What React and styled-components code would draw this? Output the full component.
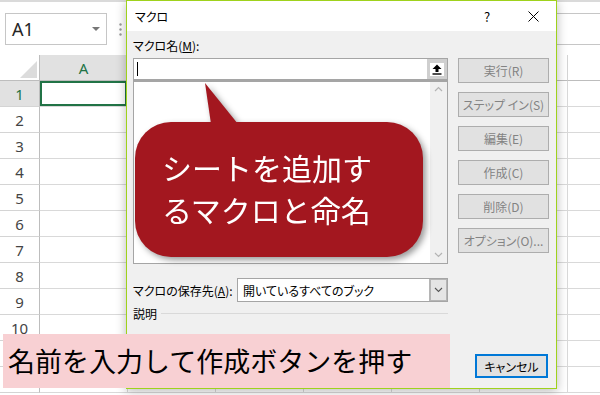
import React from 'react';
import styled, { createGlobalStyle } from 'styled-components';

const GlobalStyle = createGlobalStyle`
  html, body {
    margin: 0;
    padding: 0;
    background: #fff;
  }
  body {
    font-family: "Noto Sans CJK JP", "Noto Sans", sans-serif;
  }
`;

const jp = `"Noto Sans CJK JP", "Noto Sans", sans-serif`;

const Sheet = styled.div`
  position: relative;
  width: 600px;
  height: 395px;
  overflow: hidden;
  background: #fff;
`;

const TopBar = styled.div`
  display: flex;
  align-items: flex-start;
  height: 55px;
  box-sizing: border-box;
  border-top: 2px solid #dadada;
  padding-top: 11px;
`;

const NameBox = styled.div`
  display: flex;
  align-items: center;
  justify-content: space-between;
  width: 102px;
  height: 32px;
  margin-left: 5px;
  box-sizing: border-box;
  border: 1px solid #c6c6c6;
  padding: 0 6px;
  font-family: "Noto Sans", sans-serif;
  font-size: 18px;
  color: #262626;
`;

const Caret = styled.span`
  width: 0;
  height: 0;
  border-left: 4px solid transparent;
  border-right: 4px solid transparent;
  border-top: 4px solid #777;
`;

const DotsWrap = styled.div`
  display: flex;
  align-items: center;
  height: 32px;
  margin-left: 12px;
`;

const FormulaBar = styled.div`
  flex: 1;
  height: 32px;
  margin-left: 6px;
  box-sizing: border-box;
  border-top: 1px solid #c6c6c6;
  border-bottom: 1px solid #c6c6c6;
`;

const Grid = styled.div`
  display: grid;
  grid-template-columns: 40px repeat(7, 88px);
  grid-template-rows: 26px;
  grid-auto-rows: 26px;
  font-family: "Noto Sans", sans-serif;
`;

const Corner = styled.div`
  position: relative;
  box-sizing: border-box;
  border-right: 1px solid #bdbdbd;
  border-bottom: 1px solid #bdbdbd;

  &::after {
    content: '';
    position: absolute;
    right: 2px;
    bottom: 2px;
    width: 0;
    height: 0;
    border-left: 17px solid transparent;
    border-bottom: 17px solid #dcdcdc;
  }
`;

const ColHeader = styled.div`
  display: flex;
  align-items: center;
  justify-content: center;
  box-sizing: border-box;
  border-right: 1px solid #d4d4d4;
  border-bottom: 1px solid #bdbdbd;
  background: ${p => (p.$active ? '#e1e1e1' : '#fff')};
  color: ${p => (p.$active ? '#217346' : '#444')};
  font-size: 15px;
`;

const RowHeader = styled.div`
  display: flex;
  align-items: center;
  justify-content: center;
  box-sizing: border-box;
  border-right: 1px solid #bdbdbd;
  border-bottom: 1px solid #d4d4d4;
  background: ${p => (p.$active ? '#e1e1e1' : '#fff')};
  color: ${p => (p.$active ? '#217346' : '#444')};
  font-size: 15px;
`;

const Cell = styled.div`
  box-sizing: border-box;
  border-right: 1px solid #d9d9d9;
  border-bottom: 1px solid #d9d9d9;
  box-shadow: ${p => (p.$selected ? 'inset 0 0 0 2px #217346' : 'none')};
`;

const Dialog = styled.div`
  position: absolute;
  left: 126px;
  top: 0;
  width: 431px;
  height: 389px;
  box-sizing: border-box;
  border: 1px solid #9fd21c;
  display: flex;
  flex-direction: column;
  background: #f0f0f0;
  box-shadow: 0 2px 10px rgba(0, 0, 0, 0.28);
  font-family: ${jp};
  font-feature-settings: "palt";
  font-size: 12px;
  color: #000;
`;

const TitleBar = styled.div`
  display: flex;
  align-items: center;
  height: 30px;
  background: #fff;
  padding-left: 8px;
`;

const TitleText = styled.span`
  flex: 1;
`;

const TitleButton = styled.div`
  display: flex;
  align-items: center;
  justify-content: center;
  width: 46px;
  height: 30px;
  font-size: 13px;
`;

const Body = styled.div`
  flex: 1;
  padding: 6px 7px 0 6px;
`;

const Main = styled.div`
  display: grid;
  grid-template-columns: 315px 91px;
  column-gap: 10px;
`;

const LeftCol = styled.div`
  display: flex;
  flex-direction: column;
`;

const Label = styled.div`
  height: 18px;
  line-height: 18px;
  margin-bottom: 3px;
`;

const NameInput = styled.div`
  display: flex;
  align-items: center;
  height: 22px;
  box-sizing: border-box;
  border: 1px solid #a5a5a5;
  background: #fff;
`;

const TextCursor = styled.span`
  width: 1px;
  height: 14px;
  margin-left: 3px;
  background: #000;
`;

const UploadButton = styled.div`
  display: flex;
  align-items: center;
  justify-content: center;
  margin-left: auto;
  width: 20px;
  height: 20px;
  background: #cfcfcf;
`;

const UploadInner = styled.div`
  display: flex;
  align-items: center;
  justify-content: center;
  width: 14px;
  height: 13px;
  background: #fff;
`;

const ListBox = styled.div`
  display: flex;
  height: 184px;
  box-sizing: border-box;
  border: 1px solid #a5a5a5;
  border-top-width: 2px;
  background: #fff;
`;

const ListArea = styled.div`
  flex: 1;
`;

const ScrollBar = styled.div`
  display: flex;
  flex-direction: column;
  justify-content: space-between;
  align-items: center;
  width: 17px;
  padding: 4px 0 5px;
  background: #f0f0f0;
`;

const RightCol = styled.div`
  display: flex;
  flex-direction: column;
  gap: 9px;
  padding-top: 21px;
`;

const Button = styled.div`
  display: flex;
  align-items: center;
  justify-content: center;
  height: 25px;
  box-sizing: border-box;
  border: 1px solid #adadad;
  background: #e1e1e1;
  color: #838383;
  white-space: nowrap;
`;

const SaveRow = styled.div`
  display: flex;
  align-items: center;
  width: 315px;
  height: 24px;
  margin-top: 14px;
`;

const SaveLabel = styled.div`
  width: 104px;
`;

const Select = styled.div`
  display: flex;
  align-items: stretch;
  flex: 1;
  height: 24px;
  box-sizing: border-box;
  border: 1px solid #a5a5a5;
  background: #fff;
`;

const SelectText = styled.div`
  flex: 1;
  display: flex;
  align-items: center;
  padding-left: 5px;
`;

const SelectArrow = styled.div`
  display: flex;
  align-items: center;
  justify-content: center;
  width: 15px;
  border: 1px solid #b5b5b5;
  border-left-width: 2px;
  background: #e5e5e5;
`;

const DescRow = styled.div`
  display: flex;
  align-items: center;
  width: 315px;
  height: 16px;
  margin-top: 3px;
`;

const Divider = styled.div`
  flex: 1;
  height: 1px;
  margin-left: 4px;
  background: #d9d9d9;
`;

const Footer = styled.div`
  display: flex;
  justify-content: flex-end;
  margin-top: 33px;
  padding-right: 1px;
`;

const CancelButton = styled(Button)`
  width: 73px;
  height: 24px;
  border: 2px solid #0078d7;
  color: #000;
`;

const CalloutWrap = styled.div`
  position: absolute;
  left: 135px;
  top: 122px;
  width: 288px;
  height: 135px;
  filter: drop-shadow(3px 3px 3px rgba(0, 0, 0, 0.4));
`;

const Tail = styled.svg`
  position: absolute;
  left: 68px;
  top: -39px;
`;

const Bubble = styled.div`
  height: 100%;
  box-sizing: border-box;
  border-radius: 36px;
  background: #a3171f;
  padding: 24px 0 0 27px;
  color: #fff;
  font-family: ${jp};
  font-size: 30px;
  line-height: 42px;
  letter-spacing: 0;
  white-space: nowrap;
`;

const Caption = styled.div`
  position: absolute;
  left: 3px;
  top: 334px;
  width: 447px;
  height: 54px;
  box-sizing: border-box;
  padding-left: 5px;
  background: #f8d0d3;
  color: #000;
  font-family: ${jp};
  font-size: 27px;
  line-height: 54px;
  white-space: nowrap;
`;

// only column A and rows 1-10 show through the dialog and caption
const cols = ['A', '', '', '', '', '', ''];
const rows = Array.from({ length: 12 }, (_, i) => i + 1);
const buttons = ['実行(R)', 'ステップ イン(S)', '編集(E)', '作成(C)', '削除(D)', 'オプション(O)...'];

const Chevron = ({ up }) => (
  <svg width="9" height="6" viewBox="0 0 9 6">
    <polyline
      points={up ? '1,5 4.5,1.5 8,5' : '1,1 4.5,4.5 8,1'}
      fill="none"
      stroke="#b4b4b4"
      strokeWidth="1.2"
    />
  </svg>
);

export default function App() {
  return (
    <>
      <GlobalStyle />
      <Sheet>
        <TopBar>
          <NameBox>
            <span>A1</span>
            <Caret />
          </NameBox>
          <DotsWrap>
            <svg width="3" height="13" viewBox="0 0 3 13">
              <circle cx="1.5" cy="1.5" r="1.2" fill="#9a9a9a" />
              <circle cx="1.5" cy="6.5" r="1.2" fill="#9a9a9a" />
              <circle cx="1.5" cy="11.5" r="1.2" fill="#9a9a9a" />
            </svg>
          </DotsWrap>
          <FormulaBar />
        </TopBar>

        <Grid>
          <Corner />
          {cols.map((c, i) => (
            <ColHeader key={i} $active={i === 0}>{c}</ColHeader>
          ))}
          {rows.map(r => (
            <React.Fragment key={r}>
              <RowHeader $active={r === 1}>{r <= 10 ? r : ''}</RowHeader>
              {cols.map((c, i) => (
                <Cell key={i} $selected={r === 1 && i === 0} />
              ))}
            </React.Fragment>
          ))}
        </Grid>

        <Dialog>
          <TitleBar>
            <TitleText>マクロ</TitleText>
            <TitleButton>?</TitleButton>
            <TitleButton>
              <svg width="11" height="11" viewBox="0 0 11 11">
                <path d="M0.5 0.5 L10.5 10.5 M10.5 0.5 L0.5 10.5" stroke="#000" strokeWidth="1" />
              </svg>
            </TitleButton>
          </TitleBar>
          <Body>
            <Main>
              <LeftCol>
                <Label>マクロ名(<u>M</u>):</Label>
                <NameInput>
                  <TextCursor />
                  <UploadButton>
                    <UploadInner>
                      <svg width="10" height="11" viewBox="0 0 10 11">
                        <path d="M5 0.5 L9.5 5 L6.5 5 L6.5 8 L3.5 8 L3.5 5 L0.5 5 Z" fill="#000" />
                        <rect x="0.5" y="9.3" width="9" height="1.4" fill="#000" />
                      </svg>
                    </UploadInner>
                  </UploadButton>
                </NameInput>
                <ListBox>
                  <ListArea />
                  <ScrollBar>
                    <Chevron up />
                    <Chevron />
                  </ScrollBar>
                </ListBox>
              </LeftCol>
              <RightCol>
                {buttons.map(b => (
                  <Button key={b}>{b}</Button>
                ))}
              </RightCol>
            </Main>

            <SaveRow>
              <SaveLabel>マクロの保存先(<u>A</u>):</SaveLabel>
              <Select>
                <SelectText>開いているすべてのブック</SelectText>
                <SelectArrow>
                  <svg width="9" height="6" viewBox="0 0 9 6">
                    <polyline points="1,1 4.5,4.5 8,1" fill="none" stroke="#555" strokeWidth="1.1" />
                  </svg>
                </SelectArrow>
              </Select>
            </SaveRow>

            <DescRow>
              <span>説明</span>
              <Divider />
            </DescRow>

            <Footer>
              <CancelButton>キャンセル</CancelButton>
            </Footer>
          </Body>
        </Dialog>

        <CalloutWrap>
          <Tail width="36" height="41" viewBox="0 0 36 41">
            <polygon points="2,0 8,41 35,41" fill="#a3171f" />
          </Tail>
          <Bubble>
            シートを追加す<br />
            るマクロと命名
          </Bubble>
        </CalloutWrap>

        <Caption>名前を入力して作成ボタンを押す</Caption>
      </Sheet>
    </>
  );
}
